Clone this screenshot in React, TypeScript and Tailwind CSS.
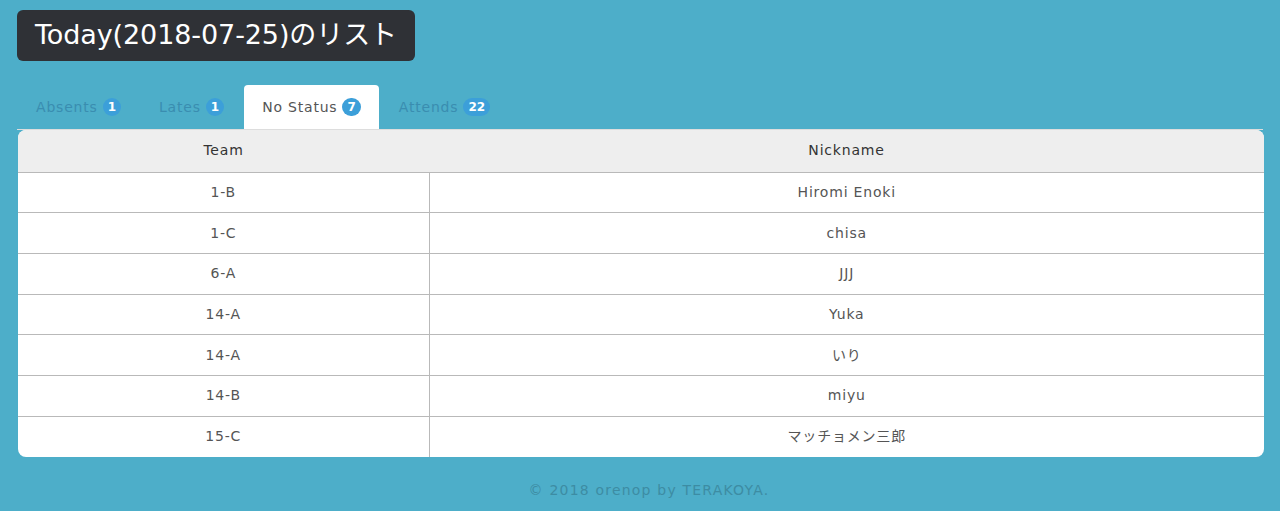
import React from 'react'

const tabs = [
  { label: 'Absents', count: 1 },
  { label: 'Lates', count: 1 },
  { label: 'No Status', count: 7, active: true },
  { label: 'Attends', count: 22 },
]

const rows = [
  ['1-B', 'Hiromi Enoki'],
  ['1-C', 'chisa'],
  ['6-A', 'JJJ'],
  ['14-A', 'Yuka'],
  ['14-A', 'いり'],
  ['14-B', 'miyu'],
  ['15-C', 'マッチョメン三郎'],
]

const font = { fontFamily: '"DejaVu Sans", "Noto Sans CJK JP", sans-serif' }

export default function App() {
  return (
    <div className="min-h-[511px] bg-[#4daec9] px-[17px] pt-[10px]" style={font}>
      <h1 className="inline-flex h-[51px] items-center rounded-md bg-[#2f3136] px-[18px] text-[27px] tracking-[-0.1px] text-white">
        Today(2018-07-25)のリスト
      </h1>

      <ul className="mt-[24px] flex border-b border-[#dddddd] pl-px">
        {tabs.map((t) => (
          <li
            key={t.label}
            className={
              'mr-[2px] flex h-[44px] items-center rounded-t-[4px] px-[18px] text-[14px] ' +
              (t.active ? 'bg-white text-[#555555]' : 'text-[#3a8db0]')
            }
          >
            <span className="tracking-[0.8px]">{t.label}</span>
            <span className="ml-[5px] flex h-[18px] min-w-[18px] items-center justify-center rounded-full bg-[#3c9fd9] px-[5px] text-[12px] font-bold text-white">
              {t.count}
            </span>
          </li>
        ))}
      </ul>

      <div className="mr-[-1px] ml-px overflow-hidden rounded-[8px] bg-white">
        <table className="w-full border-collapse text-[14px] tracking-[0.8px]">
          <thead>
            <tr className="h-[42px] bg-[#eeeeee] text-[#333333]">
              <th className="w-[411px] border-b border-[#b9b9b9] font-normal">Team</th>
              <th className="border-b border-[#b9b9b9] font-normal">Nickname</th>
            </tr>
          </thead>
          <tbody>
            {rows.map(([team, nick], i) => (
              <tr key={i} className="h-[40.7px] text-[#555555]">
                <td className={'border-r border-[#b9b9b9] text-center ' + (i < rows.length - 1 ? 'border-b' : '')}>{team}</td>
                <td className={'border-[#b9b9b9] text-center ' + (i < rows.length - 1 ? 'border-b' : '')}>{nick}</td>
              </tr>
            ))}
          </tbody>
        </table>
      </div>

      <footer className="pt-[23px] pb-[10px] pl-[18px] text-center text-[14px] tracking-[1.2px] text-[#3d8ca3]">
        © 2018 orenop by TERAKOYA.
      </footer>
    </div>
  )
}
